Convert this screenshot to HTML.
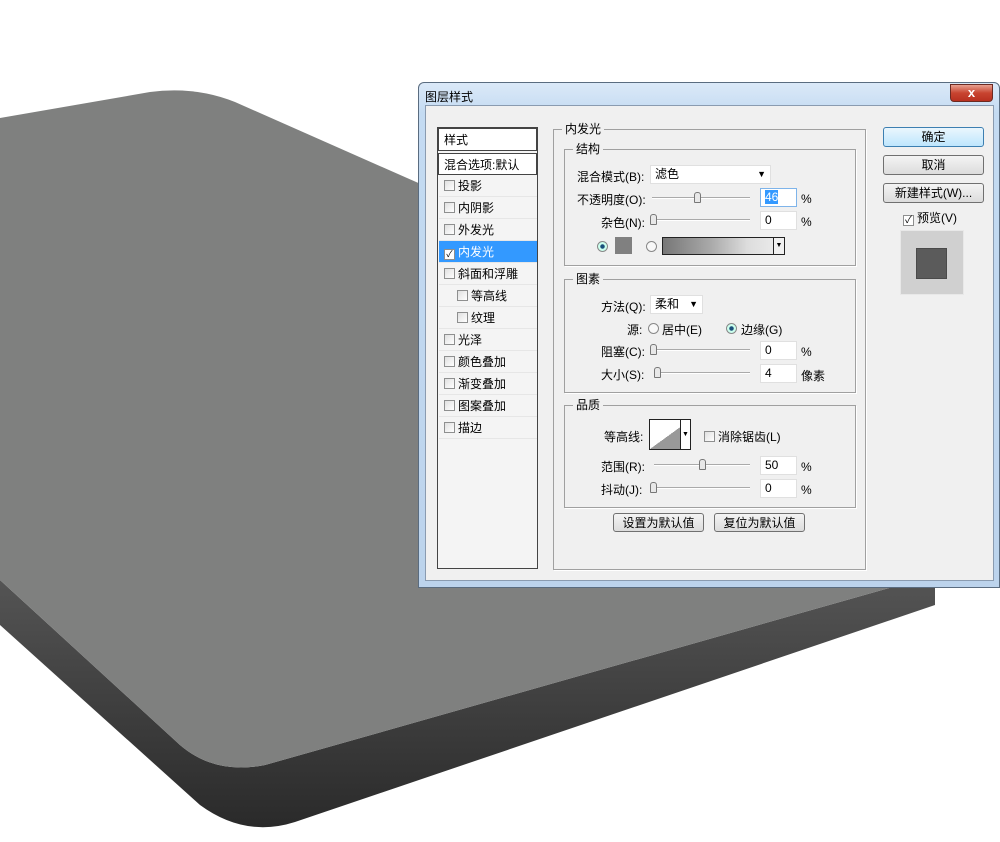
<!DOCTYPE html>
<html><head><meta charset="utf-8">
<style>
*{margin:0;padding:0;box-sizing:border-box}
body{width:1000px;height:842px;overflow:hidden;background:#fff;position:relative;font-family:"Liberation Sans","Noto Sans CJK SC",sans-serif;font-size:12px;color:#000}
.a{position:absolute}
.dlg{left:418px;top:82px;width:582px;height:506px;border:1px solid #5a6c80;border-radius:6px 6px 0 0;background:linear-gradient(#dbe9f8,#c4dbf2 30px,#bcd3ec);}
.inner{left:6px;top:22px;width:569px;height:476px;background:#f0f0f0;border:1px solid #8a9bb0}
.grp{border:1px solid #a0a0a0;box-shadow:1px 1px 0 #fff}
.lg{position:absolute;top:-8px;left:8px;background:#f0f0f0;padding:0 3px;line-height:14px}
.cb{display:inline-block;width:11px;height:11px;border:1px solid #8e8f8f;background:linear-gradient(135deg,#e0e0e0,#fff);vertical-align:-1px;margin-right:3px}
.li{position:absolute;left:1px;width:98px;height:22px;line-height:22px;padding-left:5px;border-bottom:1px solid #e6e6e6}
.btn{position:absolute;border:1px solid #707070;border-radius:3px;background:linear-gradient(#f4f4f4,#dcdcdc);text-align:center;line-height:18px}
.inp{position:absolute;background:#fff;border:1px solid #e0e0e0;height:19px;line-height:17px;padding-left:4px}
.sl{position:absolute;height:2px;border-top:1px solid #aaa;border-bottom:1px solid #fff}
.th{position:absolute;width:7px;height:11px;border:1px solid #777;border-radius:3px 3px 1px 1px;background:#e8e8e8}
.rb{position:absolute;width:11px;height:11px;border-radius:50%;border:1px solid #888;background:#f8f8f8}
</style></head><body>
<svg class="a" style="left:0;top:0" width="1000" height="842">
<defs><linearGradient id="d" x1="0" y1="0" x2="0" y2="1"><stop offset="0" stop-color="#555"/><stop offset="1" stop-color="#2a2a2a"/></linearGradient></defs>
<path d="M0,580 L180,745 Q215,775 265,765 L935,575 L935,605 L295,822 Q245,838 200,805 L0,625 Z" fill="url(#d)"/>
<path d="M0,118 L150,92 Q195,86 235,102 L1000,440 L1000,555 L935,575 L265,765 Q215,775 180,745 L0,580 Z" fill="#7f807f"/>
</svg>
<div class="a dlg">
 <div class="a" style="left:6px;top:5px">图层样式</div>
 <div class="a" style="left:531px;top:1px;width:43px;height:18px;border:1px solid #6b2a22;border-radius:0 0 4px 4px;background:linear-gradient(#e8a090,#c84430 50%,#b83020);color:#fff;font-weight:bold;text-align:center;line-height:16px;font-size:13px">x</div>
 <div class="a inner">
  <div class="a" style="left:11px;top:21px;width:101px;height:442px;border:1px solid #444;background:#f4f4f4">
   <div class="li" style="top:0;border:1px solid #444;height:23px;left:0;width:99px;background:#fff">样式</div>
   <div class="li" style="top:25px;border:1px solid #444;left:0;width:99px;background:#fff">混合选项:默认</div>
   <div class="li" style="top:47px"><span class="cb"></span>投影</div>
   <div class="li" style="top:69px"><span class="cb"></span>内阴影</div>
   <div class="li" style="top:91px"><span class="cb"></span>外发光</div>
   <div class="li" style="top:113px;background:#3399ff;color:#fff"><span class="cb" style="background:#fff;font-size:9px;color:#000;line-height:9px;text-align:center">✓</span>内发光</div>
   <div class="li" style="top:135px"><span class="cb"></span>斜面和浮雕</div>
   <div class="li" style="top:157px;padding-left:18px"><span class="cb"></span>等高线</div>
   <div class="li" style="top:179px;padding-left:18px"><span class="cb"></span>纹理</div>
   <div class="li" style="top:201px"><span class="cb"></span>光泽</div>
   <div class="li" style="top:223px"><span class="cb"></span>颜色叠加</div>
   <div class="li" style="top:245px"><span class="cb"></span>渐变叠加</div>
   <div class="li" style="top:267px"><span class="cb"></span>图案叠加</div>
   <div class="li" style="top:289px"><span class="cb"></span>描边</div>
  </div>
  <div class="a grp" style="left:127px;top:23px;width:313px;height:441px"><span class="lg">内发光</span>
   <div class="a grp" style="left:10px;top:19px;width:292px;height:117px"><span class="lg">结构</span></div>
   <div class="a grp" style="left:10px;top:149px;width:292px;height:114px"><span class="lg">图素</span></div>
   <div class="a grp" style="left:10px;top:275px;width:292px;height:103px"><span class="lg">品质</span></div>
  </div>
 </div>
</div>
<div class="a" style="left:577px;top:168px">混合模式(B):</div>
<div class="inp" style="left:650px;top:165px;width:121px">滤色<span style="position:absolute;right:4px;font-size:9px">▼</span></div>
<div class="a" style="left:577px;top:191px">不透明度(O):</div>
<div class="sl" style="left:652px;top:197px;width:98px"></div><div class="th" style="left:694px;top:192px"></div>
<div class="inp" style="left:760px;top:188px;width:37px;border-color:#7eb4ea"><span style="background:#3399ff;color:#fff">46</span></div><div class="a" style="left:801px;top:192px">%</div>
<div class="a" style="left:601px;top:214px">杂色(N):</div>
<div class="sl" style="left:652px;top:219px;width:98px"></div><div class="th" style="left:650px;top:214px"></div>
<div class="inp" style="left:760px;top:211px;width:37px">0</div><div class="a" style="left:801px;top:215px">%</div>
<div class="rb" style="left:597px;top:241px;background:radial-gradient(#1a4f7a 30%,#cfe 40%)"></div>
<div class="a" style="left:615px;top:237px;width:17px;height:17px;background:#808080"></div>
<div class="rb" style="left:646px;top:241px"></div>
<div class="a" style="left:662px;top:237px;width:123px;height:18px;border:1px solid #222;background:linear-gradient(90deg,#777,#aaa 40%,#ddd 70%,#eee)"><span style="position:absolute;right:0;top:0;width:11px;height:16px;border-left:1px solid #222;background:#f0f0f0;font-size:7px;text-align:center;line-height:16px">▼</span></div>
<div class="a" style="left:601px;top:298px">方法(Q):</div>
<div class="inp" style="left:650px;top:295px;width:53px">柔和<span style="position:absolute;right:4px;font-size:9px">▼</span></div>
<div class="a" style="left:627px;top:321px">源:</div>
<div class="rb" style="left:648px;top:323px"></div><div class="a" style="left:662px;top:321px">居中(E)</div>
<div class="rb" style="left:726px;top:323px;background:radial-gradient(#1a4f7a 30%,#cfe 40%)"></div><div class="a" style="left:741px;top:321px">边缘(G)</div>
<div class="a" style="left:601px;top:343px">阻塞(C):</div>
<div class="sl" style="left:652px;top:349px;width:98px"></div><div class="th" style="left:650px;top:344px"></div>
<div class="inp" style="left:760px;top:341px;width:37px">0</div><div class="a" style="left:801px;top:345px">%</div>
<div class="a" style="left:601px;top:366px">大小(S):</div>
<div class="sl" style="left:656px;top:372px;width:94px"></div><div class="th" style="left:654px;top:367px"></div>
<div class="inp" style="left:760px;top:364px;width:37px">4</div><div class="a" style="left:801px;top:367px">像素</div>
<div class="a" style="left:604px;top:428px">等高线:</div>
<div class="a" style="left:649px;top:419px;width:42px;height:31px;border:1px solid #222;background:linear-gradient(to bottom right,#fff 50%,#999 50%)"><span style="position:absolute;right:0;top:0;width:10px;height:29px;border-left:1px solid #222;background:#fff;font-size:7px;text-align:center;line-height:29px">▼</span></div>
<div class="a" style="left:704px;top:428px"><span class="cb"></span>消除锯齿(L)</div>
<div class="a" style="left:601px;top:458px">范围(R):</div>
<div class="sl" style="left:654px;top:464px;width:96px"></div><div class="th" style="left:699px;top:459px"></div>
<div class="inp" style="left:760px;top:456px;width:37px">50</div><div class="a" style="left:801px;top:460px">%</div>
<div class="a" style="left:601px;top:481px">抖动(J):</div>
<div class="sl" style="left:652px;top:487px;width:98px"></div><div class="th" style="left:650px;top:482px"></div>
<div class="inp" style="left:760px;top:479px;width:37px">0</div><div class="a" style="left:801px;top:483px">%</div>
<div class="btn" style="left:613px;top:513px;width:91px;height:19px">设置为默认值</div>
<div class="btn" style="left:714px;top:513px;width:91px;height:19px">复位为默认值</div>
<div class="btn" style="left:883px;top:127px;width:101px;height:20px;border-color:#3c7fb1;background:linear-gradient(#eaf6fd,#bee6fd)">确定</div>
<div class="btn" style="left:883px;top:155px;width:101px;height:20px">取消</div>
<div class="btn" style="left:883px;top:183px;width:101px;height:20px">新建样式(W)...</div>
<div class="a" style="left:903px;top:209px"><span class="cb" style="font-size:10px;line-height:9px;text-align:center;background:#fff">✓</span>预览(V)</div>
<div class="a" style="left:900px;top:230px;width:64px;height:65px;background:#d0d0d0;border:1px solid #e8e8e8"></div>
<div class="a" style="left:916px;top:248px;width:31px;height:31px;background:#5b5b5b;border:1px solid #4a4a4a"></div>
</body></html>
